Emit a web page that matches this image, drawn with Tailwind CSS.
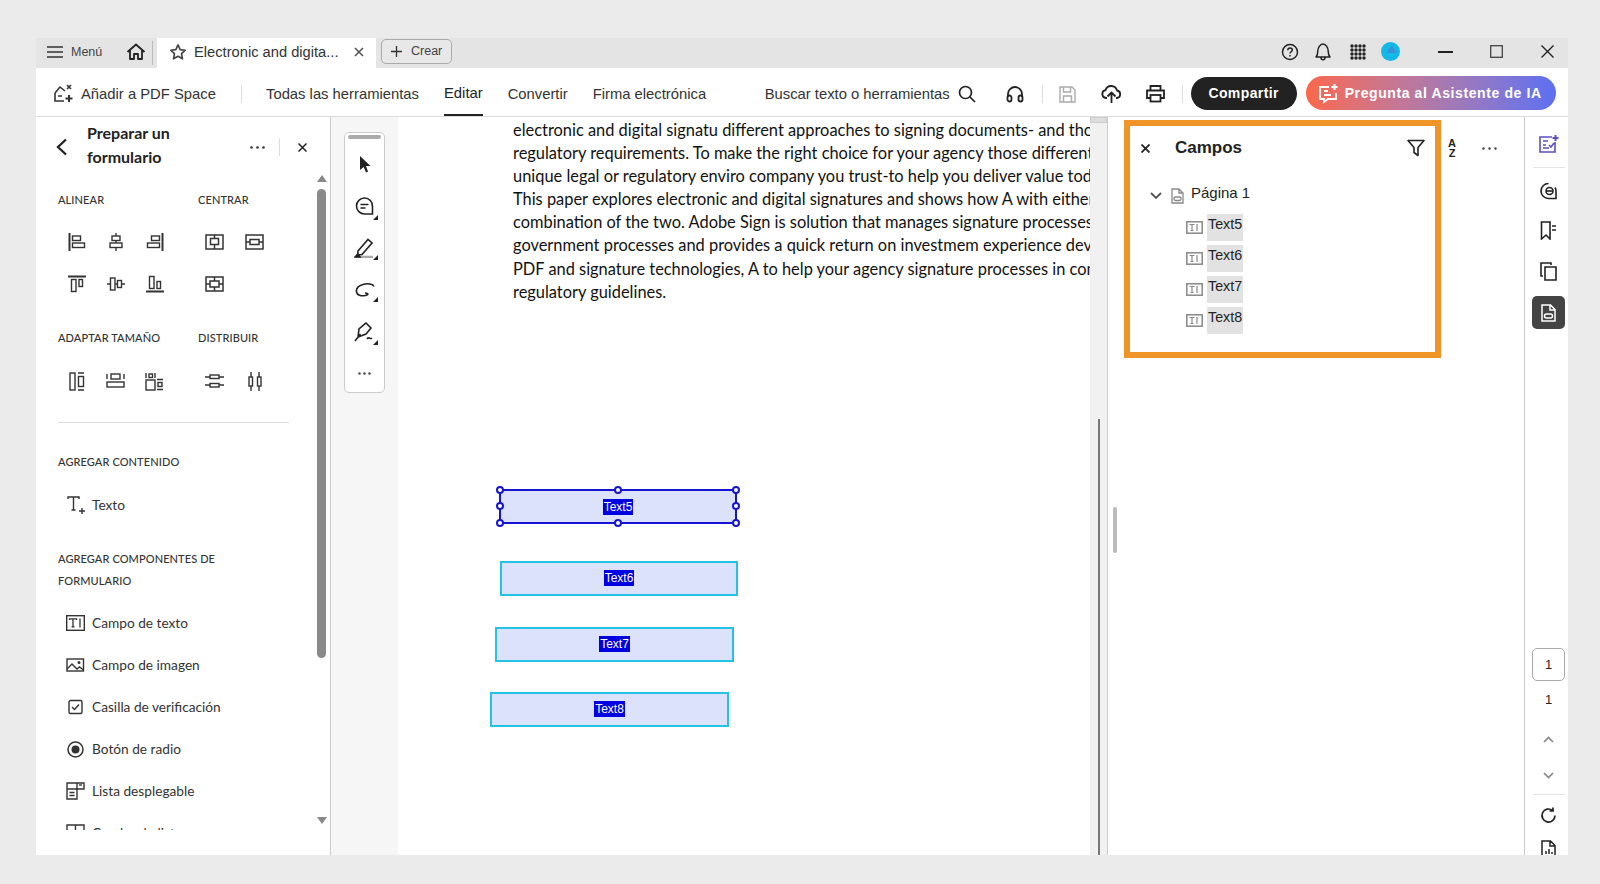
<!DOCTYPE html>
<html lang="es">
<head>
  <meta charset="UTF-8" />
  <title>Preparar un formulario</title>
  <script src="https://cdn.jsdelivr.net/npm/@tailwindcss/browser@4"></script>
</head>
<body class="bg-[#ebebeb] h-[884px] w-[1600px] overflow-hidden pt-[38px] pl-[36px] pr-[32px] font-['Liberation_Sans',sans-serif] text-[#222]">
<div class="h-[817px] flex flex-col bg-white overflow-hidden">

  <!-- Tab bar -->
  <div class="h-[30px] shrink-0 flex items-center bg-[#e4e4e4] text-[#333]">
    <div class="flex items-center w-[116px] h-full pl-[11px] pb-[2px]">
      <svg class="w-[16px] h-[14px]" viewBox="0 0 16 14" fill="none" stroke="#333" stroke-width="1.5"><path d="M0 2h16M0 7h16M0 12h16"/></svg>
      <span class="ml-[8px] w-[32px] text-[12.500px] text-[#444]">Menú</span>
      <svg class="ml-[23px] w-[20px] h-[20px]" viewBox="0 0 20 20" fill="none" stroke="#222" stroke-width="1.800" stroke-linejoin="round"><path d="M1.500 10 10 2.500l8.500 7.500M4 8.500V17h4v-5h4v5h4V8.500"/></svg>
    </div>
    <div class="w-px h-[24px] bg-[#bbb]"></div>
    <div class="ml-[4px] w-[219px] h-full bg-white flex items-center pl-[12px] pb-[2px]">
      <svg class="w-[18px] h-[18px] shrink-0" viewBox="0 0 24 24" fill="none" stroke="#444" stroke-width="2.200" stroke-linejoin="round"><path d="M12 2.500l2.900 6.300 6.800.8-5 4.700 1.300 6.800-6-3.400-6 3.400 1.300-6.800-5-4.700 6.800-.8z"/></svg>
      <span class="ml-[7px] w-[147px] text-[14.700px] whitespace-nowrap text-[#333]">Electronic and digita...</span>
      <svg class="ml-[13px] w-[10px] h-[10px]" viewBox="0 0 10 10" stroke="#555" stroke-width="1.600"><path d="M1 1l8 8M9 1l-8 8"/></svg>
    </div>
    <div class="ml-[5px] mb-[3px] w-[71px] h-[25px] flex items-center border border-[#aaa] rounded-[5px] bg-[#e8e8e8] pl-[9px]">
      <svg class="w-[11px] h-[11px]" viewBox="0 0 11 11" stroke="#333" stroke-width="1.300"><path d="M5.500 0v11M0 5.500h11"/></svg>
      <span class="ml-[9px] text-[12.500px] text-[#444]">Crear</span>
    </div>
    <div class="ml-auto flex items-center h-full pb-[3px]">
      <svg class="w-[18px] h-[18px]" viewBox="0 0 18 18" fill="none" stroke="#222" stroke-width="1.500"><circle cx="9" cy="9" r="7.500"/><path d="M6.800 7.200c0-3 4.500-2.800 4.500-.2 0 1.700-2.300 1.800-2.300 3.500M9 12v1.500"/></svg>
      <svg class="ml-[15px] w-[18px] h-[20px]" viewBox="0 0 18 20" fill="none" stroke="#222" stroke-width="1.500" stroke-linejoin="round"><path d="M2 15c1.500-1.500 1.800-3 1.800-6S6 2 9 2s5.200 4 5.200 7 .3 4.500 1.800 6zM7 15.500c0 3 4 3 4 0"/></svg>
      <svg class="ml-[18px] w-[16px] h-[16px]" viewBox="0 0 16 16" fill="#222"><circle cx="2" cy="2" r="1.700"/><circle cx="6" cy="2" r="1.700"/><circle cx="10" cy="2" r="1.700"/><circle cx="14" cy="2" r="1.700"/><circle cx="2" cy="6" r="1.700"/><circle cx="6" cy="6" r="1.700"/><circle cx="10" cy="6" r="1.700"/><circle cx="14" cy="6" r="1.700"/><circle cx="2" cy="10" r="1.700"/><circle cx="6" cy="10" r="1.700"/><circle cx="10" cy="10" r="1.700"/><circle cx="14" cy="10" r="1.700"/><circle cx="2" cy="14" r="1.700"/><circle cx="6" cy="14" r="1.700"/><circle cx="10" cy="14" r="1.700"/><circle cx="14" cy="14" r="1.700"/></svg>
      <svg class="ml-[15px] w-[19px] h-[19px]" viewBox="0 0 19 19"><circle cx="9.500" cy="9.500" r="9.500" fill="#12b9e6"/><path d="M5 11 11 3.500 15.500 11z" fill="#3a8fd8"/></svg>
      <svg class="ml-[38px] w-[15px] h-[2px]" viewBox="0 0 15 2"><path d="M0 1h15" stroke="#222" stroke-width="2"/></svg>
      <svg class="ml-[37px] w-[13px] h-[13px]" viewBox="0 0 13 13" fill="none" stroke="#444" stroke-width="1.300"><rect x=".7" y=".7" width="11.600" height="11.600"/></svg>
      <svg class="ml-[38px] mr-[14px] w-[13px] h-[13px]" viewBox="0 0 13 13" stroke="#222" stroke-width="1.400"><path d="M.5.5l12 12M12.500.5l-12 12"/></svg>
    </div>
  </div>

  <!-- Toolbar -->
  <div class="h-[49px] shrink-0 flex items-center border-b border-[#ddd] pt-[4px] text-[14.800px] text-[#333]">
    <svg class="ml-[17px] w-[20px] h-[20px] shrink-0" viewBox="0 0 20 20" fill="none" stroke="#333" stroke-width="1.600"><path d="M2 9l5-6 5 4M2 9v8h9M5 12h4M14 1l4 4M18 1l-4 4"/><path d="M16 11v7M12.500 14.500h7" stroke-width="2"/></svg>
    <span class="ml-[8px] w-[136px] whitespace-nowrap">Añadir a PDF Space</span>
    <div class="ml-[24px] w-px h-[18px] bg-[#ddd]"></div>
    <span class="ml-[24px] w-[154px] whitespace-nowrap">Todas las herramientas</span>
    <div class="ml-[24px] h-full flex items-center border-b-2 border-[#222] text-[#222]">Editar</div>
    <span class="ml-[25px] w-[61px] whitespace-nowrap">Convertir</span>
    <span class="ml-[24px] w-[116px] whitespace-nowrap">Firma electrónica</span>
    <span class="ml-[56px] w-[185px] whitespace-nowrap">Buscar texto o herramientas</span>
    <svg class="ml-[8px] w-[18px] h-[18px]" viewBox="0 0 18 18" fill="none" stroke="#222" stroke-width="1.700"><circle cx="7.500" cy="7.500" r="6"/><path d="M12 12l5 5"/></svg>
    <svg class="ml-[29px] w-[20px] h-[18px]" viewBox="0 0 20 18" fill="none" stroke="#222" stroke-width="1.800"><path d="M3 12V9a7 7 0 0 1 14 0v3"/><rect x="2.500" y="10.500" width="4" height="6" rx="2"/><rect x="13.500" y="10.500" width="4" height="6" rx="2"/></svg>
    <div class="ml-[17px] w-px h-[18px] bg-[#ddd]"></div>
    <svg class="ml-[16px] w-[17px] h-[17px]" viewBox="0 0 17 17" fill="none" stroke="#aaa" stroke-width="1.400"><path d="M1 1h12l3 3v12H1zM4.500 1v5h7V1M4.500 16v-6h8v6"/></svg>
    <svg class="ml-[25px] w-[21px] h-[19px]" viewBox="0 0 21 19" fill="none" stroke="#222" stroke-width="1.800" stroke-linejoin="round"><path d="M6 13H5A4 4 0 0 1 4.500 5.100 6 6 0 0 1 16 5.500 3.800 3.800 0 0 1 16 13h-1"/><path d="M10.500 18V8M6.500 11.500l4-4 4 4"/></svg>
    <svg class="ml-[24px] w-[19px] h-[18px]" viewBox="0 0 19 18" fill="none" stroke="#222" stroke-width="1.800"><path d="M4.500 5V1h10v4M4.500 13H1V5.500h17V13h-3.500"/><rect x="4.500" y="10" width="10" height="6.500"/></svg>
    <div class="ml-[17px] w-px h-[18px] bg-[#ddd]"></div>
    <div class="ml-[8px] -mt-[2px] w-[106px] h-[33px] rounded-full bg-[#222] text-white font-bold text-[14px] tracking-[0.4px] flex items-center justify-center">Compartir</div>
    <div class="ml-[9px] -mt-[2px] w-[250px] h-[34px] rounded-full bg-gradient-to-r from-[#fb674a] to-[#5c6ff2] text-white font-bold text-[14px] tracking-[0.6px] flex items-center pl-[12px]">
      <svg class="w-[21px] h-[21px] shrink-0" viewBox="0 0 21 21" fill="none" stroke="#fff" stroke-width="1.800"><path d="M11 4H2v12h4v3l4-3h8v-6M6 8h4M6 12h7"/><path d="M16.500 1v6M13.500 4h6" stroke-width="2"/></svg>
      <span class="ml-[6px] whitespace-nowrap">Pregunta al Asistente de IA</span>
    </div>
  </div>

  <div class="flex-1 min-h-0 flex">

    <!-- Left panel -->
    <aside class="w-[295px] shrink-0 flex border-r border-[#ccc] font-['Lato',sans-serif] text-[#333]">
      <div class="w-[281px] h-[713px] overflow-hidden">
        <div class="h-[60px] flex items-center">
          <svg class="ml-[20px] w-[12px] h-[18px]" viewBox="0 0 12 18" fill="none" stroke="#222" stroke-width="2.300"><path d="M10 1.500 2 9l8 7.500"/></svg>
          <div class="ml-[19px] -mt-[4px] w-[148px] text-[16px] leading-[24px] font-bold text-[#222]">Preparar un<br />formulario</div>
          <svg class="ml-[15px] w-[15px] h-[3px]" viewBox="0 0 15 3" fill="#333"><circle cx="1.500" cy="1.500" r="1.300"/><circle cx="7.500" cy="1.500" r="1.300"/><circle cx="13.500" cy="1.500" r="1.300"/></svg>
          <div class="ml-[14px] w-px h-[18px] bg-[#ddd]"></div>
          <svg class="ml-[18px] w-[9px] h-[9px]" viewBox="0 0 9 9" stroke="#222" stroke-width="1.500"><path d="M.5.5l8 8M8.500.5l-8 8"/></svg>
        </div>

        <div class="mt-[15px] flex pl-[22px] text-[11px] leading-[16px] tracking-[0.1px] font-medium text-[#333]">
          <span class="w-[140px]">ALINEAR</span><span>CENTRAR</span>
        </div>
        <div class="mt-[13px] flex pl-[21px]">
          <div class="w-[137.500px] grid grid-cols-[39px_39px_39px] grid-rows-[42px_42px] place-items-center">
            <svg class="w-[18px] h-[18px]" viewBox="0 0 18 18" fill="none" stroke="#333" stroke-width="1.400"><path d="M1.500 0v18" stroke-width="2"/><rect x="4.500" y="3" width="8" height="4.500"/><rect x="4.500" y="10" width="12" height="4.500"/></svg>
            <svg class="w-[18px] h-[18px]" viewBox="0 0 18 18" fill="none" stroke="#333" stroke-width="1.400"><path d="M9 0v3M9 7.500V10M9 14.500V18"/><rect x="5" y="3" width="8" height="4.500"/><rect x="3" y="10" width="12" height="4.500"/></svg>
            <svg class="w-[18px] h-[18px]" viewBox="0 0 18 18" fill="none" stroke="#333" stroke-width="1.400"><path d="M16.500 0v18" stroke-width="2"/><rect x="5.500" y="3" width="8" height="4.500"/><rect x="1.500" y="10" width="12" height="4.500"/></svg>
            <svg class="w-[18px] h-[18px]" viewBox="0 0 18 18" fill="none" stroke="#333" stroke-width="1.400"><path d="M0 1.500h18" stroke-width="2"/><rect x="3.500" y="4.500" width="4.500" height="12"/><rect x="11" y="4.500" width="3.500" height="7"/></svg>
            <svg class="w-[18px] h-[18px]" viewBox="0 0 18 18" fill="none" stroke="#333" stroke-width="1.400"><path d="M0 9h3.500M8 9h2.500M14.500 9H18"/><rect x="3.500" y="3" width="4.500" height="12"/><rect x="10.500" y="5.500" width="4" height="7"/></svg>
            <svg class="w-[18px] h-[18px]" viewBox="0 0 18 18" fill="none" stroke="#333" stroke-width="1.400"><path d="M0 16.500h18" stroke-width="2"/><rect x="3.500" y="1.500" width="4.500" height="12"/><rect x="11" y="6.500" width="3.500" height="7"/></svg>
          </div>
          <div class="grid grid-cols-[40px_40px] grid-rows-[42px_42px] place-items-center">
            <svg class="w-[19px] h-[16px]" viewBox="0 0 19 16" fill="none" stroke="#333" stroke-width="1.500"><rect x="1" y="1" width="17" height="14"/><rect x="5.500" y="4.500" width="8" height="6"/><path d="M9.500 1v3.500M9.500 10.500V15"/></svg>
            <svg class="w-[19px] h-[16px]" viewBox="0 0 19 16" fill="none" stroke="#333" stroke-width="1.500"><rect x="1" y="1" width="17" height="14"/><rect x="5" y="5.500" width="9" height="5"/><path d="M1 8h4M14 8h4"/></svg>
            <svg class="w-[19px] h-[16px]" viewBox="0 0 19 16" fill="none" stroke="#333" stroke-width="1.500"><rect x="1" y="1" width="17" height="14"/><rect x="5" y="5" width="9" height="6"/><path d="M1 8h4M14 8h4M9.500 1v4M9.500 11v4"/></svg>
          </div>
        </div>

        <div class="mt-[25px] flex pl-[22px] text-[11px] leading-[16px] tracking-[0.1px] font-medium text-[#333]">
          <span class="w-[140px]">ADAPTAR TAMAÑO</span><span>DISTRIBUIR</span>
        </div>
        <div class="mt-[25px] flex pl-[21px] h-[20px] items-center">
          <div class="w-[137.500px] grid grid-cols-[39px_39px_39px] place-items-center">
            <svg class="w-[18px] h-[19px]" viewBox="0 0 18 19" fill="none" stroke="#333" stroke-width="1.400"><rect x="2" y="1" width="5" height="17"/><rect x="10.500" y="4.500" width="5" height="10"/><path d="M10 1h6M10 18h6"/></svg>
            <svg class="w-[19px] h-[18px]" viewBox="0 0 19 18" fill="none" stroke="#333" stroke-width="1.400"><rect x="1" y="10" width="17" height="5"/><rect x="5" y="2" width="9" height="5"/><path d="M1 2v5M18 2v5"/></svg>
            <svg class="w-[19px] h-[19px]" viewBox="0 0 19 19" fill="none" stroke="#333" stroke-width="1.400"><rect x="1" y="8" width="9" height="10"/><rect x="4" y="2" width="3.500" height="3.500"/><rect x="13" y="10.500" width="4" height="4"/><path d="M1 1v5M10 1v5M12 7.500h6M12 17.500h6"/></svg>
          </div>
          <div class="grid grid-cols-[40px_40px] place-items-center">
            <svg class="w-[19px] h-[16px]" viewBox="0 0 19 16" fill="none" stroke="#333" stroke-width="1.400"><rect x="5" y="2" width="9" height="3.500"/><rect x="5" y="10.500" width="9" height="3.500"/><path d="M0 4h5M14 4h5M0 12h5M14 12h5"/></svg>
            <svg class="w-[16px] h-[19px]" viewBox="0 0 16 19" fill="none" stroke="#333" stroke-width="1.400"><rect x="2" y="5" width="3.500" height="9"/><rect x="10.500" y="5" width="3.500" height="9"/><path d="M4 0v5M4 14v5M12 0v5M12 14v5"/></svg>
          </div>
        </div>

        <div class="mt-[31px] ml-[22px] w-[231px] h-px bg-[#ddd]"></div>

        <div class="mt-[31px] pl-[22px] text-[11px] leading-[16px] tracking-[0.1px] font-medium text-[#333]">AGREGAR CONTENIDO</div>
        <div class="mt-[25px] h-[20px] flex items-center text-[13.700px] pl-[31px]">
          <svg class="w-[20px] h-[20px]" viewBox="0 0 20 20" fill="none" stroke="#333" stroke-width="1.400"><path d="M1 4V2h11v2M6.500 2v13M4.500 15h4"/><path d="M15 13v6M12 16h6"/></svg>
          <span class="ml-[5px]">Texto</span>
        </div>

        <div class="mt-[33px] pl-[22px] w-[240px] text-[11px] leading-[22px] tracking-[0.1px] font-medium text-[#333]">AGREGAR COMPONENTES DE FORMULARIO</div>

        <ul class="mt-[10px] pl-[30px] text-[13.700px]">
          <li class="h-[42px] flex items-center">
            <svg class="w-[19px] h-[16px]" viewBox="0 0 19 16" fill="none" stroke="#333" stroke-width="1.400"><rect x=".7" y=".7" width="17.600" height="14.600"/><path d="M3.500 5V3.800h7V5M7 3.800v8M5.500 11.800h3M14 3.500v9" stroke-width="1.300"/></svg>
            <span class="ml-[7px]">Campo de texto</span>
          </li>
          <li class="h-[42px] flex items-center">
            <svg class="w-[19px] h-[16px]" viewBox="0 0 19 16" fill="none" stroke="#333" stroke-width="1.400"><rect x="1" y="2" width="16.500" height="12"/><path d="M1 12l5-5 5 5 2.500-2 4 3"/><circle cx="13" cy="5.500" r=".8"/></svg>
            <span class="ml-[7px]">Campo de imagen</span>
          </li>
          <li class="h-[42px] flex items-center">
            <svg class="w-[19px] h-[16px]" viewBox="0 0 19 16" fill="none" stroke="#333" stroke-width="1.400"><rect x="3" y="1.500" width="13" height="13" rx="1.500"/><path d="M6 8l2.500 2.500L13 5.500"/></svg>
            <span class="ml-[7px]">Casilla de verificación</span>
          </li>
          <li class="h-[42px] flex items-center">
            <svg class="w-[19px] h-[17px]" viewBox="0 0 19 17" fill="none" stroke="#333" stroke-width="1.500"><circle cx="9.500" cy="8.500" r="7.500"/><circle cx="9.500" cy="8.500" r="4" fill="#333" stroke="none"/></svg>
            <span class="ml-[7px]">Botón de radio</span>
          </li>
          <li class="h-[42px] flex items-center">
            <svg class="w-[19px] h-[18px]" viewBox="0 0 19 18" fill="none" stroke="#333" stroke-width="1.400"><path d="M11 7H1V1h10zM11 1h7v6h-7M1 7v10h10V7M3.500 10.500h5M3.500 13.500h5"/><path d="M13 3h3" /></svg>
            <span class="ml-[7px]">Lista desplegable</span>
          </li>
          <li class="h-[42px] flex items-center">
            <svg class="w-[19px] h-[18px]" viewBox="0 0 19 18" fill="none" stroke="#333" stroke-width="1.400"><path d="M1 1h17v16H1zM9.500 1v16M1 7h17"/></svg>
            <span class="ml-[7px]">Cuadro de lista</span>
          </li>
        </ul>
      </div>
      <div class="w-[9px] flex flex-col items-center pt-[58px]">
        <svg class="w-[10px] h-[7px] shrink-0" viewBox="0 0 10 7" fill="#888"><path d="M5 0l5 7H0z"/></svg>
        <div class="mt-[7px] w-[9px] h-[469px] rounded-full bg-[#8a8a8a]"></div>
        <svg class="mt-[159px] w-[10px] h-[7px] shrink-0" viewBox="0 0 10 7" fill="#888"><path d="M5 7L0 0h10z"/></svg>
      </div>
    </aside>

    <!-- Quick tools -->
    <div class="w-[67px] shrink-0 bg-[#f6f6f6] pt-[15px] pl-[13px]">
      <div class="w-[41px] h-[261px] rounded-[5px] border border-[#ccc] bg-white flex flex-col items-center pt-[2px]">
        <div class="w-[33px] h-[4px] rounded-[2px] bg-[#aaa]"></div>
        <div class="mt-[16px] h-[18px] flex items-center"><svg class="w-[12px] h-[17px]" viewBox="0 0 12 17" fill="#222"><path d="M1 0l10.500 10H7l2 5.500-2 1-2.300-5.500L1 14z"/></svg></div>
        <div class="mt-[24px] w-full h-[21px] relative flex justify-center">
          <svg class="w-[19px] h-[19px]" viewBox="0 0 19 19" fill="none" stroke="#222" stroke-width="1.600"><path d="M9.500 1a8 8 0 1 0 0 16H17.500V9.500A8 8 0 0 0 9.500 1zM5.500 7.500h8M5.500 11h5"/></svg>
          <div class="absolute right-[6px] bottom-[-2px] w-0 h-0 border-l-[5px] border-l-transparent border-b-[5px] border-b-[#222]"></div>
        </div>
        <div class="mt-[19px] w-full h-[21px] relative flex justify-center">
          <svg class="w-[21px] h-[21px]" viewBox="0 0 21 21" fill="none" stroke="#222" stroke-width="1.600"><path d="M4 14 14 2.500l4 3.500L8 17.500 3.500 18z"/><path d="M2 20h17" stroke="#aaa" stroke-width="2.500"/><path d="M1 20l3-3 2 3z" fill="#222"/></svg>
          <div class="absolute right-[6px] bottom-[-2px] w-0 h-0 border-l-[5px] border-l-transparent border-b-[5px] border-b-[#222]"></div>
        </div>
        <div class="mt-[21px] w-full h-[21px] relative flex justify-center items-center">
          <svg class="w-[20px] h-[14px]" viewBox="0 0 20 14" fill="none" stroke="#222" stroke-width="1.600"><path d="M19 3.500C18 1 13 0 8 1.500S1 6 1.500 9 6 13.500 10.500 12.500 12 10 10 10"/></svg>
          <div class="absolute right-[6px] bottom-[-2px] w-0 h-0 border-l-[5px] border-l-transparent border-b-[5px] border-b-[#222]"></div>
        </div>
        <div class="mt-[22px] w-full h-[21px] relative flex justify-center">
          <svg class="w-[21px] h-[20px]" viewBox="0 0 21 20" fill="none" stroke="#222" stroke-width="1.600"><path d="M12 1l5 5-5 6-8 3 1-8zM1 19l5.500-7M13 17c2-3 3 1 5-1"/></svg>
          <div class="absolute right-[6px] bottom-[-2px] w-0 h-0 border-l-[5px] border-l-transparent border-b-[5px] border-b-[#222]"></div>
        </div>
        <svg class="mt-[29px] w-[13px] h-[3px]" viewBox="0 0 13 3" fill="#444"><circle cx="1.500" cy="1.500" r="1.200"/><circle cx="6.500" cy="1.500" r="1.200"/><circle cx="11.500" cy="1.500" r="1.200"/></svg>
      </div>
    </div>

    <!-- Document -->
    <main class="w-[692px] shrink-0 relative overflow-hidden bg-white">
      <div class="pl-[115px] pt-[1px] font-['Lato',sans-serif] text-[16.400px] leading-[23.100px] text-[#111] whitespace-nowrap">
        <p>electronic and digital signatu different approaches to signing documents- and those</p>
        <p>regulatory requirements. To make the right choice for your agency those different</p>
        <p>unique legal or regulatory enviro company you trust-to help you deliver value today</p>
        <p>This paper explores electronic and digital signatures and shows how A with either</p>
        <p>combination of the two. Adobe Sign is solution that manages signature processes</p>
        <p>government processes and provides a quick return on investmem experience develop</p>
        <p>PDF and signature technologies, A to help your agency signature processes in compliance</p>
        <p>regulatory guidelines.</p>
      </div>

      <div class="absolute left-[101px] top-[372px] w-[238px] h-[35px] border-2 border-[#1414d2] bg-[#dce2fb] flex items-center justify-center">
        <span class="bg-[#0000e0] text-white text-[12px] leading-[16px] px-px">Text5</span>
        <i class="absolute -left-[5px] -top-[5px] w-[8px] h-[8px] rounded-full border-2 border-[#1414d2] bg-white"></i>
        <i class="absolute left-[113px] -top-[5px] w-[8px] h-[8px] rounded-full border-2 border-[#1414d2] bg-white"></i>
        <i class="absolute -right-[5px] -top-[5px] w-[8px] h-[8px] rounded-full border-2 border-[#1414d2] bg-white"></i>
        <i class="absolute -left-[5px] top-[11px] w-[8px] h-[8px] rounded-full border-2 border-[#1414d2] bg-white"></i>
        <i class="absolute -right-[5px] top-[11px] w-[8px] h-[8px] rounded-full border-2 border-[#1414d2] bg-white"></i>
        <i class="absolute -left-[5px] -bottom-[5px] w-[8px] h-[8px] rounded-full border-2 border-[#1414d2] bg-white"></i>
        <i class="absolute left-[113px] -bottom-[5px] w-[8px] h-[8px] rounded-full border-2 border-[#1414d2] bg-white"></i>
        <i class="absolute -right-[5px] -bottom-[5px] w-[8px] h-[8px] rounded-full border-2 border-[#1414d2] bg-white"></i>
      </div>
      <div class="absolute left-[102px] top-[444px] w-[238px] h-[35px] border-2 border-[#22c3e6] bg-[#dce2fb] flex items-center justify-center pb-[2px]">
        <span class="bg-[#0000e0] text-white text-[12px] leading-[16px] px-px">Text6</span>
      </div>
      <div class="absolute left-[97px] top-[510px] w-[239px] h-[35px] border-2 border-[#22c3e6] bg-[#dce2fb] flex items-center justify-center pb-[2px]">
        <span class="bg-[#0000e0] text-white text-[12px] leading-[16px] px-px">Text7</span>
      </div>
      <div class="absolute left-[92px] top-[575px] w-[239px] h-[35px] border-2 border-[#22c3e6] bg-[#dce2fb] flex items-center justify-center pb-[2px]">
        <span class="bg-[#0000e0] text-white text-[12px] leading-[16px] px-px">Text8</span>
      </div>
    </main>

    <!-- Document scrollbar -->
    <div class="w-[18px] shrink-0 bg-[#f1f1f1] border-r border-[#ccc] flex flex-col items-center">
      <div class="w-full h-[6px] bg-[#ddd] border border-[#ccc]"></div>
      <div class="mt-[296px] w-[2px] flex-1 bg-[#777]"></div>
    </div>

    <!-- Fields panel -->
    <section class="w-[416px] shrink-0 relative text-[#222]">
      <div class="absolute left-[5px] top-[390px] w-[4px] h-[46px] rounded-full bg-[#bbb]"></div>
      <div class="absolute left-[16px] top-[3px] w-[317px] h-[238px] border-[6px] border-[#ef9427] pointer-events-none"></div>

      <div class="h-[62px] flex items-center">
        <svg class="ml-[33px] w-[9px] h-[9px]" viewBox="0 0 9 9" stroke="#222" stroke-width="1.800"><path d="M.5.5l8 8M8.500.5l-8 8"/></svg>
        <h2 class="ml-[25px] w-[232px] text-[17px] leading-[24px] font-bold">Campos</h2>
        <svg class="w-[18px] h-[18px]" viewBox="0 0 18 18" fill="none" stroke="#222" stroke-width="1.600" stroke-linejoin="round"><path d="M1 1.500h16l-6 7v8l-4-3v-5z"/></svg>
        <div class="ml-[21px] w-[12px] flex flex-col items-center text-[11px] leading-[10px] font-bold"><span>A</span><span>Z</span></div>
        <svg class="ml-[24px] w-[15px] h-[3px]" viewBox="0 0 15 3" fill="#444"><circle cx="1.500" cy="1.500" r="1.200"/><circle cx="7.500" cy="1.500" r="1.200"/><circle cx="13.500" cy="1.500" r="1.200"/></svg>
      </div>

      <div class="h-[30px] flex items-center text-[15px]">
        <svg class="ml-[42px] w-[12px] h-[8px] mt-[4px]" viewBox="0 0 12 8" fill="none" stroke="#555" stroke-width="1.800"><path d="M1 1l5 5 5-5"/></svg>
        <svg class="ml-[9px] w-[13px] h-[16px] mt-[4px]" viewBox="0 0 13 16" fill="none" stroke="#888" stroke-width="1.300"><path d="M1 1h7l4 4v10H1zM8 1v4h4"/><rect x="3" y="9" width="7" height="3.500" rx="1.500"/></svg>
        <span class="ml-[7px] -mt-[1px]">Página 1</span>
      </div>

      <ul class="pt-[5px] pl-[78px] flex flex-col gap-[4px] text-[14.300px] leading-[20px] text-[#222]">
        <li class="h-[27px] flex items-center">
          <svg class="w-[17px] h-[13px] -mt-[1px]" viewBox="0 0 17 13" fill="none" stroke="#888" stroke-width="1.500"><rect x=".8" y=".8" width="15.400" height="11.400"/><path d="M3.500 3.500h5M6 3.500v6M4.500 9.500h3M11 3v7" stroke-width="1.200"/></svg>
          <span class="ml-[4px] w-[36px] h-[27px] bg-[#e2e2e2] pl-[1px]">Text5</span>
        </li>
        <li class="h-[27px] flex items-center">
          <svg class="w-[17px] h-[13px] -mt-[1px]" viewBox="0 0 17 13" fill="none" stroke="#888" stroke-width="1.500"><rect x=".8" y=".8" width="15.400" height="11.400"/><path d="M3.500 3.500h5M6 3.500v6M4.500 9.500h3M11 3v7" stroke-width="1.200"/></svg>
          <span class="ml-[4px] w-[36px] h-[27px] bg-[#e2e2e2] pl-[1px]">Text6</span>
        </li>
        <li class="h-[27px] flex items-center">
          <svg class="w-[17px] h-[13px] -mt-[1px]" viewBox="0 0 17 13" fill="none" stroke="#888" stroke-width="1.500"><rect x=".8" y=".8" width="15.400" height="11.400"/><path d="M3.500 3.500h5M6 3.500v6M4.500 9.500h3M11 3v7" stroke-width="1.200"/></svg>
          <span class="ml-[4px] w-[36px] h-[27px] bg-[#e2e2e2] pl-[1px]">Text7</span>
        </li>
        <li class="h-[27px] flex items-center">
          <svg class="w-[17px] h-[13px] -mt-[1px]" viewBox="0 0 17 13" fill="none" stroke="#888" stroke-width="1.500"><rect x=".8" y=".8" width="15.400" height="11.400"/><path d="M3.500 3.500h5M6 3.500v6M4.500 9.500h3M11 3v7" stroke-width="1.200"/></svg>
          <span class="ml-[4px] w-[36px] h-[27px] bg-[#e2e2e2] pl-[1px]">Text8</span>
        </li>
      </ul>
    </section>

    <!-- Right rail -->
    <div class="w-[44px] shrink-0 border-l border-[#ccc] flex flex-col items-center pl-[4px] overflow-hidden text-[#222]">
      <svg class="mt-[17px] w-[21px] h-[20px] shrink-0" viewBox="0 0 21 20" fill="none" stroke="#5b4fc4" stroke-width="1.600"><path d="M14 3H2v15h15V8M5 7h5M5 11h3M5 14h6M11 11l2 2 3-4"/><path d="M17.500 1v6M14.500 4h6" stroke-width="2"/></svg>
      <div class="mt-[13px] w-[32px] h-px bg-[#e5e5e5] shrink-0"></div>
      <svg class="mt-[14px] w-[19px] h-[18px] shrink-0" viewBox="0 0 19 18" fill="none" stroke="#222" stroke-width="1.600"><path d="M9.500 1.500a7.500 7.500 0 1 0 0 15H17V9a7.500 7.500 0 0 0-1-3.500"/><circle cx="10.500" cy="9" r="3.500"/><path d="M7 9h7"/></svg>
      <svg class="mt-[21px] w-[17px] h-[19px] shrink-0" viewBox="0 0 17 19" fill="none" stroke="#222" stroke-width="1.600"><path d="M10 1H1.500v17L6 14l4 4V1zM12 5h4M12 9h4"/></svg>
      <svg class="mt-[22px] w-[17px] h-[19px] shrink-0" viewBox="0 0 17 19" fill="none" stroke="#222" stroke-width="1.600"><path d="M3 14H1V1h10v2"/><path d="M5 5h11v13H5z"/></svg>
      <div class="mt-[15px] w-[33px] h-[33px] rounded-[5px] bg-[#444] flex items-center justify-center shrink-0">
        <svg class="w-[15px] h-[18px]" viewBox="0 0 15 18" fill="none" stroke="#fff" stroke-width="1.500"><path d="M1 1h8.500L14 5.500V17H1zM9 1v5h5"/><rect x="3.500" y="10" width="8" height="4" rx="2"/></svg>
      </div>
      <div class="mt-[319px] w-[33px] h-[33px] rounded-[5px] border border-[#aaa] flex items-center justify-center text-[13px] shrink-0">1</div>
      <div class="mt-[10px] h-[18px] leading-[18px] text-[13px] shrink-0">1</div>
      <svg class="mt-[27px] w-[11px] h-[7px] shrink-0" viewBox="0 0 11 7" fill="none" stroke="#888" stroke-width="1.700"><path d="M1 6l4.500-4.500L10 6"/></svg>
      <svg class="mt-[29px] w-[11px] h-[7px] shrink-0" viewBox="0 0 11 7" fill="none" stroke="#888" stroke-width="1.700"><path d="M1 1l4.500 4.500L10 1"/></svg>
      <div class="mt-[15px] w-[32px] h-px bg-[#e5e5e5] shrink-0"></div>
      <svg class="mt-[12px] w-[17px] h-[17px] shrink-0" viewBox="0 0 17 17" fill="none" stroke="#222" stroke-width="1.700"><path d="M15 8.500A6.500 6.500 0 1 1 12.500 3.400M13 .5v3.500H9.500"/></svg>
      <svg class="mt-[16px] w-[15px] h-[18px] shrink-0" viewBox="0 0 15 18" fill="none" stroke="#222" stroke-width="1.500"><path d="M1 1h8.500L14 5.500V17H1zM9 1v5h5M5 14v-3M8 14V9M11 14v-2"/></svg>
    </div>
  </div>
</div>
</body>
</html>
